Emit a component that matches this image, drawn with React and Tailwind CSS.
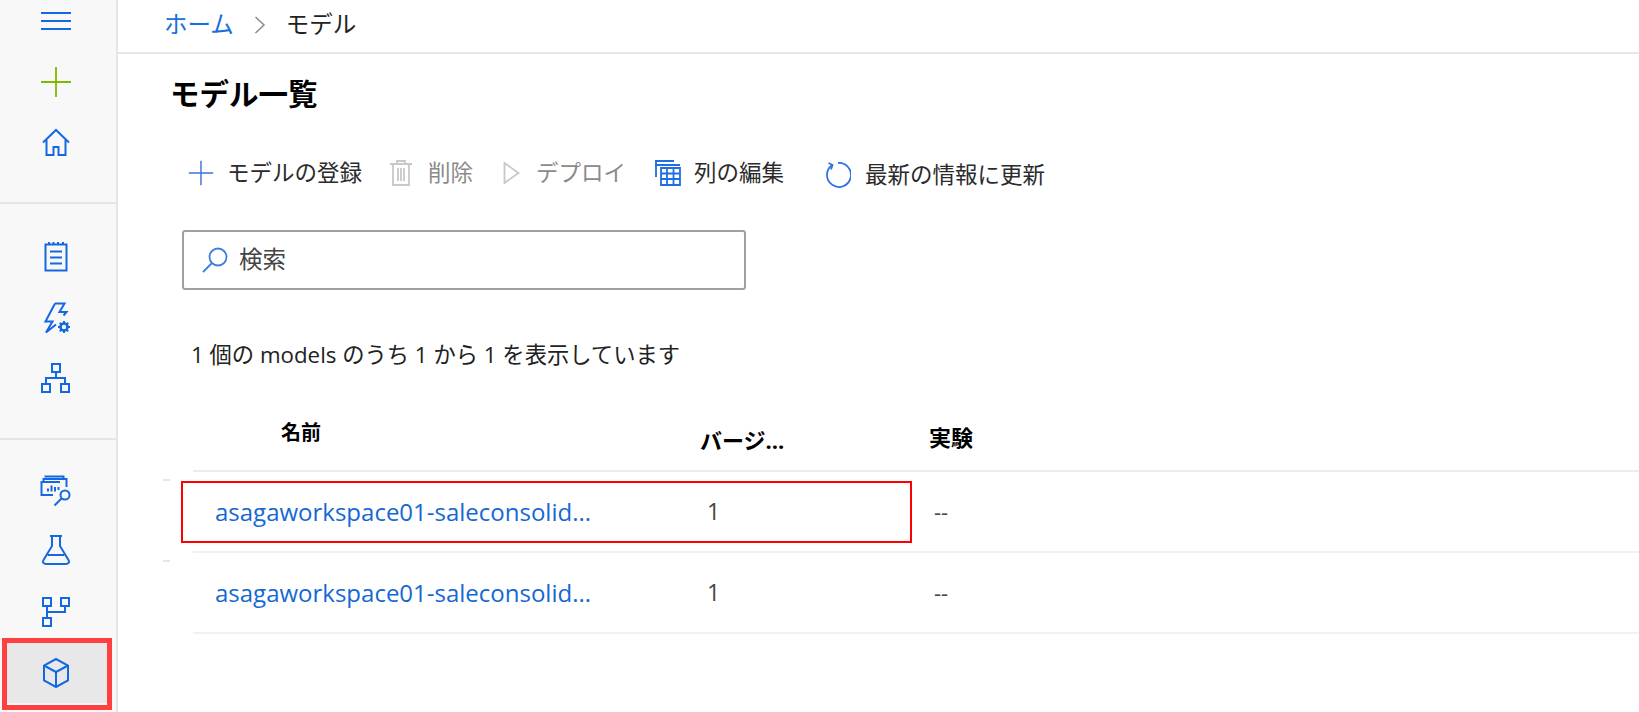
import React from 'react';

const BLUE = '#1469e0';

const Icon = ({ size = 32, color = BLUE, width = 2, children, className }) => (
  <svg
    width={size}
    height={size}
    viewBox="0 0 32 32"
    fill="none"
    stroke={color}
    strokeWidth={width}
    className={className}
  >
    {children}
  </svg>
);

const MenuIcon = () => (
  <Icon width={2.2}>
    <path d="M1 8h30M1 16h30M1 24h30" />
  </Icon>
);

const PlusIcon = ({ color = '#7fba00', size = 32 }) => (
  <Icon color={color} size={size} width={1.8}>
    <path d="M1 16h30M16 1v30" />
  </Icon>
);

const HomeIcon = () => (
  <Icon>
    <path d="M3 15.5 16 3l13 12.5" />
    <path d="M6.5 13v15h7v-8h5v8h7V13" />
  </Icon>
);

const NotebookIcon = () => (
  <Icon>
    <path d="M5.5 3.5h21v26h-21z" />
    <path d="M9 1v2.500M13.500 1v2.500M18 1v2.500M23 1v2.500" />
    <path d="M10 10.5h12M10 16.5h12M10 22.5h12" />
  </Icon>
);

const BoltGearIcon = () => (
  <Icon>
    <path d="M15 1.500h9.500L19.500 10h7l-3 3.500M15 1.500 5.500 19.500h7L6 30.500l10-8" />
    <circle cx="24" cy="25" r="3.500" strokeWidth="2.600" />
    <path d="M24 19v2.500M24 28.500V31M18 25h2.500M27.500 25H30M19.800 20.800l1.800 1.800M26.400 27.400l1.800 1.800M19.800 29.200l1.800-1.800M26.400 22.600l1.800-1.800" />
  </Icon>
);

const HierarchyIcon = () => (
  <Icon className="mt-[-3px]">
    <path d="M12 2h8v8h-8zM2 22h8v8H2zM21 22h8v8h-8z" />
    <path d="M16 10v6M6 22v-6h19v6" />
  </Icon>
);

const ChartSearchIcon = () => (
  <Icon className="mt-[4px]">
    <path d="M5.500 3.500v-1h18v3" />
    <path d="M3.500 7V5h23v8" />
    <path d="M20 8H1.500v13h11.500" />
    <path d="M8 17.500v-3M11.500 17.500V11.500M15 17.500v-4.500M18.500 16v-3" />
    <circle cx="25" cy="21" r="4.500" />
    <path d="M21.500 24.500 14.500 31.500" />
  </Icon>
);

const FlaskIcon = () => (
  <Icon>
    <path d="M10 2h12M12 2v10L3.500 26c-1.300 2.200 0 4 2.500 4h20c2.500 0 3.800-1.800 2.500-4L20 12V2" />
    <path d="M7.500 21h17" />
  </Icon>
);

const PipelineIcon = () => (
  <Icon>
    <path d="M3 2h8v8H3zM21 2h8v8h-8zM3 22h8v8H3z" />
    <path d="M7 10v12M7 16h18v-6" />
  </Icon>
);

const CubeIcon = () => (
  <Icon>
    <path d="M16 2 28 8.500v15L16 30 4 23.500v-15z" />
    <path d="M4 8.500 16 15l12-6.500M16 15v15" />
  </Icon>
);

const SideItem = ({ children }) => (
  <div className="h-[42px] w-[112px] flex items-center justify-center shrink-0">{children}</div>
);

const Sidebar = () => (
  <aside className="w-[118px] shrink-0 h-full bg-[#f8f8f8] border-r-2 border-[#e6e6e6] flex flex-col">
    <div className="h-[204px] shrink-0 border-b-2 border-[#e6e6e6] flex flex-col gap-[19px]">
      <SideItem><MenuIcon /></SideItem>
      <SideItem><PlusIcon /></SideItem>
      <SideItem><HomeIcon /></SideItem>
    </div>
    <div className="h-[236px] shrink-0 border-b-2 border-[#e6e6e6] pt-[32px] flex flex-col gap-[19px]">
      <SideItem><NotebookIcon /></SideItem>
      <SideItem><BoltGearIcon /></SideItem>
      <SideItem><HierarchyIcon /></SideItem>
    </div>
    <div className="pt-[27px] flex flex-col gap-[20px]">
      <SideItem><ChartSearchIcon /></SideItem>
      <SideItem><FlaskIcon /></SideItem>
      <SideItem><PipelineIcon /></SideItem>
      <div className="relative h-[42px] w-[112px] flex items-center justify-center shrink-0">
        <div className="absolute left-[7px] top-[-10px] w-[100px] h-[60px] bg-[#e8e8e8]" />
        <div className="absolute left-[2px] top-[-15px] w-[110px] h-[72px] border-[5px] border-[#ff4040]" />
        <div className="relative flex mt-[-3px]"><CubeIcon /></div>
      </div>
    </div>
  </aside>
);

const ToolButton = ({ icon, label, iconBox, gap, disabled, className }) => (
  <div className={`flex items-center ${className}`}>
    <div className={`flex items-center justify-center ${iconBox}`}>{icon}</div>
    <span className={`${gap} w-auto text-[22.5px] whitespace-nowrap ${disabled ? 'text-[#8a8a8a]' : 'text-[#2b2b2b]'}`}>{label}</span>
  </div>
);

const Toolbar = () => (
  <div className="h-[40px] mt-[39px] flex items-center">
    <ToolButton
      className="ml-[18px]"
      iconBox="w-[26px]"
      gap="ml-[13px]"
      label="モデルの登録"
      icon={<PlusIcon color="#3f74d6" size={26} />}
    />
    <ToolButton
      className="ml-[28px]"
      iconBox="w-[22px]"
      gap="ml-[16px]"
      disabled
      label="削除"
      icon={
        <svg width="22" height="26" viewBox="0 0 22 26" fill="none" stroke="#c8c8c8" strokeWidth="1.800">
          <path d="M0 4h22M7 4V1h8v3M3 4v21h16V4M8 8v13M11 8v13M14 8v13" />
        </svg>
      }
    />
    <ToolButton
      className="ml-[30px]"
      iconBox="w-[17px]"
      gap="ml-[16px]"
      disabled
      label="デプロイ"
      icon={
        <svg width="17" height="24" viewBox="0 0 17 24" fill="none" stroke="#c8c8c8" strokeWidth="1.800">
          <path d="M1.500 2 15.500 12 1.500 22z" />
        </svg>
      }
    />
    <ToolButton
      className="ml-[29px]"
      iconBox="w-[26px]"
      gap="ml-[13px]"
      label="列の編集"
      icon={
        <svg width="26" height="26" viewBox="0 0 26 26" fill="none" stroke="#1f6fe0" strokeWidth="1.800">
          <path d="M0 1h19M0 5h25M1 1v16M6 8h19v17H6zM6 13.500h19M6 19h19M12 8v17M18.500 8v17" />
        </svg>
      }
    />
    <ToolButton
      className="ml-[41px] pt-[3px]"
      iconBox="w-[26px]"
      gap="ml-[14px]"
      label="最新の情報に更新"
      icon={
        <svg width="26" height="26" viewBox="0 0 26 26" fill="none" stroke="#2f74e0" strokeWidth="1.800">
          <path d="M7 3.200A12 12 0 1 0 13 1" />
          <path d="M3.500 1 7.500 3 6 7.500" />
        </svg>
      }
    />
  </div>
);

const Row = ({ tick, highlighted }) => (
  <div className="relative h-[81px] border-b-2 border-[#f1f1f1] grid grid-cols-[507px_229px_1fr] items-center">
    {tick && <div className="absolute left-[-30px] top-[7px] w-[7px] h-[2px] bg-[#e6e6e6]" />}
    {highlighted && (
      <div className="absolute left-[-12px] top-[9px] w-[731px] h-[62px] border-2 border-[#ff0000]" />
    )}
    <a className="pl-[22px] text-[24px] text-[#1568d3] whitespace-nowrap">asagaworkspace01-saleconsolid...</a>
    <span className="pl-[7px] text-[23px] text-[#444444]">1</span>
    <span className="pl-[5px] text-[22px] text-[#444444]">--</span>
  </div>
);

export default function App() {
  return (
    <div
      className="w-[1639px] h-[712px] flex overflow-hidden bg-white text-[#222222]"
      style={{ fontFamily: '"Open Sans", "Noto Sans CJK JP", sans-serif' }}
    >
      <Sidebar />
      <main className="flex-1 min-w-0 flex flex-col">
        <nav className="h-[54px] shrink-0 border-b-2 border-[#e6e6e6] pl-[46px] flex items-center text-[23.5px] pb-[3px]">
          <a className="text-[#1a6fd8]">ホーム</a>
          <svg width="12" height="20" viewBox="0 0 12 20" fill="none" stroke="#8a8a8a" strokeWidth="1.500" className="ml-[20px]">
            <path d="M1.500 2 10 10 1.500 18" />
          </svg>
          <span className="ml-[20px] text-[#222222]">モデル</span>
        </nav>
        <div className="pl-[52px] flex flex-col">
          <h1 className="mt-[20px] h-[40px] leading-[40px] text-[29.5px] font-bold text-black">モデル一覧</h1>
          <Toolbar />
          <div className="mt-[37px] ml-[12px] w-[564px] h-[60px] border-2 border-[#a0a0a0] rounded-[3px] flex items-center pl-[18px]">
            <svg width="26" height="26" viewBox="0 0 26 26" fill="none" stroke="#3f7de0" strokeWidth="1.800">
              <circle cx="16" cy="10" r="8.500" />
              <path d="M10 16 1 25" />
            </svg>
            <span className="ml-[11px] text-[23.5px] text-[#444444]">検索</span>
          </div>
          <p className="mt-[50px] ml-[21px] h-[30px] leading-[30px] text-[22.3px] text-[#222222] whitespace-nowrap">
            1 個の models のうち 1 から 1 を表示しています
          </p>
          <div className="ml-[23px] flex flex-col">
            <div className="h-[102px] border-b-2 border-[#ececec] relative grid grid-cols-[507px_229px_1fr] text-[22px] font-bold text-black">
              <span className="pl-[88px] pt-[48px] text-[20px]">名前</span>
              <span className="pt-[54px] whitespace-nowrap">バージ...</span>
              <span className="pt-[51px]">実験</span>
            </div>
            <Row tick highlighted />
            <Row tick />
          </div>
        </div>
      </main>
    </div>
  );
}
